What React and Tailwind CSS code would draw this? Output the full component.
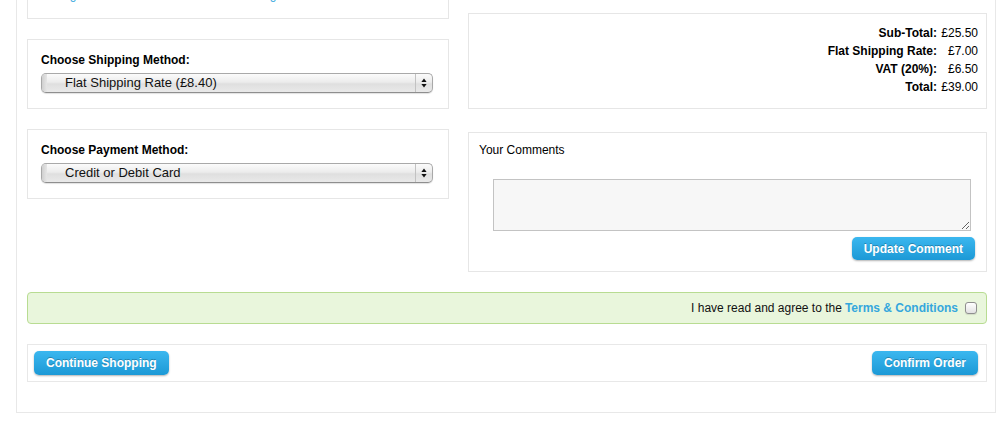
import React from "react";

function SelectBox({ value }) {
  return (
    <div className="relative flex items-center h-[20px] w-full rounded-[5px] border border-[#a9a9a9] border-b-[#8e8e8e] bg-[linear-gradient(to_bottom,#fbfbfb,#ececec_45%,#dfdfdf_55%,#e9e9e9)] shadow-[0_1px_1px_rgba(0,0,0,0.12)] overflow-hidden">
      <div className="w-[5px] self-stretch bg-[linear-gradient(to_right,#cfcfcf,#e6e6e6)]" />
      <div className="flex-1 pl-[18px] text-[13px] leading-[18px] text-[#111] font-['Liberation_Sans',Arial,sans-serif]">
        {value}
      </div>
      <div className="w-[17px] self-stretch border-l border-[#c2c2c2] flex items-center justify-center">
        <svg width="6" height="10" viewBox="0 0 6 10">
          <path d="M3 0.5 L5.6 4 L0.4 4 Z" fill="#111" />
          <path d="M3 9.5 L5.6 6 L0.4 6 Z" fill="#111" />
        </svg>
      </div>
    </div>
  );
}

function BlueButton({ children, h = "h-[24px]" }) {
  return (
    <button
      className={`inline-flex items-center ${h} px-[12px] rounded-[5px] text-white font-bold text-[12px] bg-[linear-gradient(to_bottom,#3bb7ef,#1c99d6)] shadow-[0_1px_2px_rgba(0,0,0,0.3)] [text-shadow:0_-1px_0_rgba(0,0,0,0.25)] font-['Liberation_Sans',Arial,sans-serif]`}
    >
      {children}
    </button>
  );
}

export default function App() {
  const totals = [
    ["Sub-Total:", "£25.50"],
    ["Flat Shipping Rate:", "£7.00"],
    ["VAT (20%):", "£6.50"],
    ["Total:", "£39.00"],
  ];
  return (
    <div className="bg-white min-h-[425px] overflow-hidden font-['Liberation_Sans',Arial,sans-serif] text-[12px] text-black">
      <div className="ml-[16px] -mt-[40px] w-[980px] border border-[#e8e8e8] pl-[10px] pr-[8px] pt-[10px] pb-[30px]">
        <div className="flex items-start gap-[19px]">
          {/* left column */}
          <div className="w-[422px] flex flex-col gap-[20px]">
            <div className="border border-[#e6e6e6] pt-[16px] pb-[15px] pl-[13px] flex leading-[15px]">
              <span className="w-[200px] text-[#35a7dd]">Change</span>
              <span className="text-[#35a7dd]">Change</span>
            </div>
            <div className="border border-[#e6e6e6] pt-[12px] pb-[15px] pl-[13px] pr-[15px]">
              <div className="font-bold leading-[16px]">Choose Shipping Method:</div>
              <div className="mt-[5px]">
                <SelectBox value="Flat Shipping Rate (£8.40)" />
              </div>
            </div>
            <div className="border border-[#e6e6e6] pt-[12px] pb-[15px] pl-[13px] pr-[15px]">
              <div className="font-bold leading-[16px]">Choose Payment Method:</div>
              <div className="mt-[5px]">
                <SelectBox value="Credit or Debit Card" />
              </div>
            </div>
          </div>

          {/* right column */}
          <div className="w-[519px] mt-[42px]">
            <div className="border border-[#e6e6e6] pt-[10px] pb-[12px] pr-[8px] flex justify-end">
              <table className="border-collapse">
                <tbody>
                  {totals.map(([l, v]) => (
                    <tr key={l} className="h-[18px]">
                      <td className="p-0 pr-[4px] text-right font-bold leading-[18px]">{l}</td>
                      <td className="p-0 w-[37px] text-right leading-[18px]">{v}</td>
                    </tr>
                  ))}
                </tbody>
              </table>
            </div>

            <div className="mt-[23px] border border-[#e6e6e6] pt-[10px] pl-[10px] pr-[11px] pb-[11px]">
              <div className="leading-[14px]">Your Comments</div>
              <textarea className="block mt-[22px] ml-[14px] w-[478px] h-[52px] border border-[#c3c3c3] bg-[#f7f7f7] outline-none" />
              <div className="flex justify-end mt-[6px]">
                <BlueButton h="h-[23px]">Update Comment</BlueButton>
              </div>
            </div>
          </div>
        </div>

        <div className="mt-[20px] h-[32px] rounded-[4px] border border-[#b8dc92] bg-[#e9f6dc] flex items-center justify-end pr-[9px] text-[#111]">
          <span>I have read and agree to the </span>
          <span className="ml-[3px] font-bold text-[#35a7dd]">Terms &amp; Conditions</span>
          <span className="ml-[7px] w-[12px] h-[12px] rounded-[3px] border border-[#8f8f8f] bg-[linear-gradient(to_bottom,#ffffff,#e2e2e2)] shadow-[0_1px_1px_rgba(0,0,0,0.1)]" />
        </div>

        <div className="mt-[20px] border border-[#e8e8e8] pt-[6px] pb-[6px] pl-[6px] pr-[8px] flex justify-between">
          <BlueButton>Continue Shopping</BlueButton>
          <BlueButton>Confirm Order</BlueButton>
        </div>
      </div>
    </div>
  );
}
